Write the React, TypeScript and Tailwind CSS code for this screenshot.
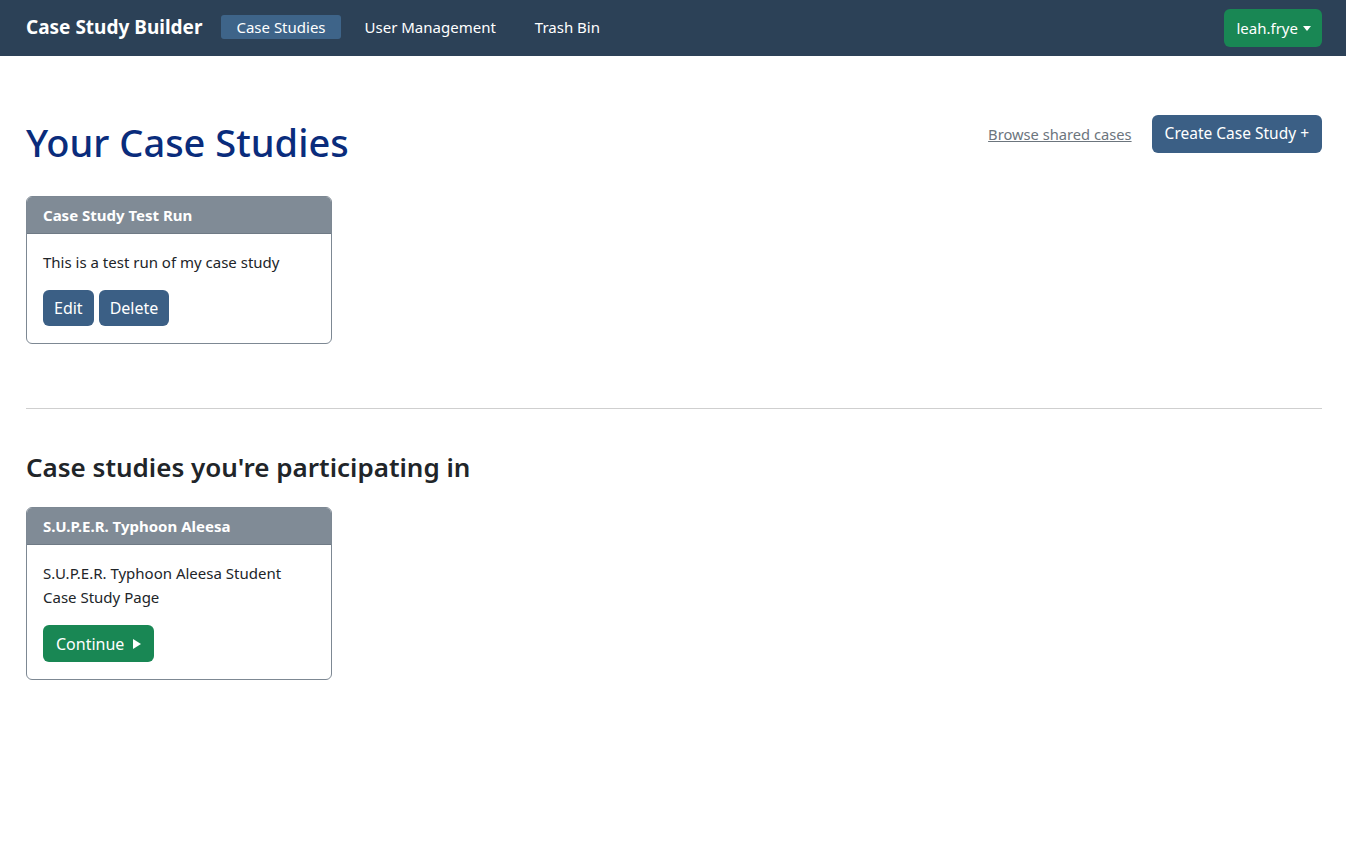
import { useState } from "react";

type Study = { title: string; description: string };

const OWN: Study[] = [
  { title: "Case Study Test Run", description: "This is a test run of my case study" },
];

const PARTICIPATING: Study[] = [
  {
    title: "S.U.P.E.R. Typhoon Aleesa",
    description: "S.U.P.E.R. Typhoon Aleesa Student Case Study Page",
  },
];

const NAV = ["Case Studies", "User Management", "Trash Bin"];

function StudyCard({ study, children }: { study: Study; children: React.ReactNode }) {
  return (
    <div className="w-[306px] rounded-md border border-[#7d8893] overflow-hidden bg-white">
      {/* Header */}
      <div className="h-[37px] flex items-center px-4 bg-[#808b96] border-b border-[#6f7a85] text-white font-bold text-[15px]">
        {study.title}
      </div>
      {/* Body */}
      <div className="px-4 pt-[16px] pb-[17px]">
        <p className="text-[15px] leading-6 text-[#212529]">{study.description}</p>
        <div className="flex gap-[5px] mt-[16px]">{children}</div>
      </div>
    </div>
  );
}

export default function App() {
  const [active] = useState("Case Studies");

  return (
    <div className="min-h-screen bg-white" style={{ fontFamily: '"Noto Sans", "Open Sans", sans-serif' }}>
      {/* Navbar */}
      <nav className="h-14 bg-[#2c4157] flex items-center pl-[26px] pr-6">
        <span className="text-white font-bold text-[19px] mr-[19px] -mt-[2px]">Case Study Builder</span>
        <div className="flex items-center gap-[9px] -mt-[2px]">
          {NAV.map(n => (
            <a
              key={n}
              className={`px-[15px] h-6 flex items-center rounded-[3px] text-[15px] text-white ${
                n === active ? "bg-[#3e6489]" : ""
              }`}
            >
              {n}
            </a>
          ))}
        </div>
        <button className="ml-auto h-[38px] pl-[12px] pr-[11px] rounded-md bg-[#198754] text-white text-[15px] flex items-center gap-[5px]">
          leah.frye
          <svg width="8" height="5" viewBox="0 0 8 5"><path d="M0 0h8L4 5z" fill="white" /></svg>
        </button>
      </nav>

      <main className="pl-[26px] pr-6">
        {/* Title row */}
        <div className="flex items-start justify-between pt-[59px]">
          <h1 className="text-[38px] leading-[56px] font-medium text-[#0a2c7c] -mt-[1px]">Your Case Studies</h1>
          <div className="flex items-center gap-5">
            <a className="text-[14.7px] text-[#6c757d] underline">Browse shared cases</a>
            <button className="h-[38px] px-[13px] rounded-md bg-[#3b5f85] text-white text-[15.5px]">
              Create Case Study +
            </button>
          </div>
        </div>

        <div className="mt-[26px]">
          {OWN.map(s => (
            <StudyCard key={s.title} study={s}>
              <button className="h-9 px-[11px] rounded-md bg-[#3b5f85] text-white text-[16px]">Edit</button>
              <button className="h-9 px-[11px] rounded-md bg-[#3b5f85] text-white text-[16px]">Delete</button>
            </StudyCard>
          ))}
        </div>

        <hr className="mt-16 border-t border-[#cfcfcf]" />

        <h2 className="mt-[40px] text-[26px] leading-9 font-semibold text-[#212529]">
          Case studies you're participating in
        </h2>

        <div className="mt-[22px]">
          {PARTICIPATING.map(s => (
            <StudyCard key={s.title} study={s}>
              <button className="h-[37px] px-[13px] rounded-md bg-[#198754] text-white text-[16px] flex items-center gap-[9px]">
                Continue
                <svg width="8" height="10" viewBox="0 0 8 10"><path d="M0 0l8 5-8 5z" fill="white" /></svg>
              </button>
            </StudyCard>
          ))}
        </div>
      </main>
    </div>
  );
}
